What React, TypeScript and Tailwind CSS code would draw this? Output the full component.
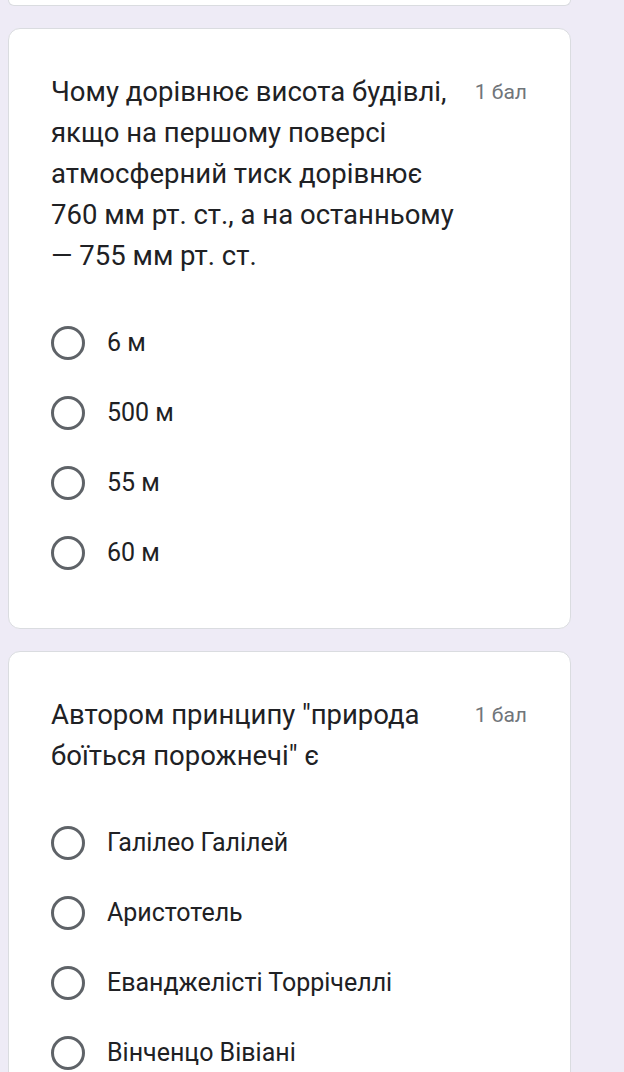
import React from "react";

type Question = {
  title: string;
  points: string;
  options: string[];
};

const questions: Question[] = [
  {
    title:
      "Чому дорівнює висота будівлі, якщо на першому поверсі атмосферний тиск дорівнює 760 мм рт. ст., а на останньому — 755 мм рт. ст.",
    points: "1 бал",
    options: ["6 м", "500 м", "55 м", "60 м"],
  },
  {
    title: 'Автором принципу "природа боїться порожнечі" є',
    points: "1 бал",
    options: ["Галілео Галілей", "Аристотель", "Еванджелісті Торрічеллі", "Вінченцо Вівіані"],
  },
];

const Radio = () => (
  <div className="w-[34px] h-[34px] shrink-0 rounded-full border-[3.5px] border-[#5f6368]" />
);

const QuestionCard = ({ q }: { q: Question }) => {
  return (
    <article className="ml-2 w-[563px] bg-white border border-[#dadce0] rounded-[12px] pl-[42px] pr-[43px] pt-[42px] pb-[40px]">
      <header className="flex items-start">
        <p className="flex-1 text-[27.5px] leading-[41px] text-[#202124]">{q.title}</p>
        <span className="ml-4 mt-[9px] text-[21px] leading-[24px] text-[#70757a] whitespace-nowrap">
          {q.points}
        </span>
      </header>
      <main className="flex flex-col mt-[32px]">
        {q.options.map((opt, index: number) => {
          return (
            <div key={index} className="flex items-center h-[70px] gap-[22px]">
              <Radio />
              <span className="text-[25px] text-[#202124]">{opt}</span>
            </div>
          );
        })}
      </main>
    </article>
  );
};

const App = () => {
  return (
    <div
      className="h-[1072px] bg-[#eeebf6] overflow-hidden"
      style={{ fontFamily: "Roboto, 'Noto Sans', sans-serif" }}
    >
      {/* tail of previous card */}
      <div className="ml-2 w-[563px] h-[6px] bg-white border border-t-0 border-[#dadce0] rounded-b-[12px]" />
      <div className="flex flex-col gap-[22px] mt-[22px]">
        {questions.map((q, index: number) => (
          <QuestionCard key={index} q={q} />
        ))}
      </div>
    </div>
  );
};

export default App;
